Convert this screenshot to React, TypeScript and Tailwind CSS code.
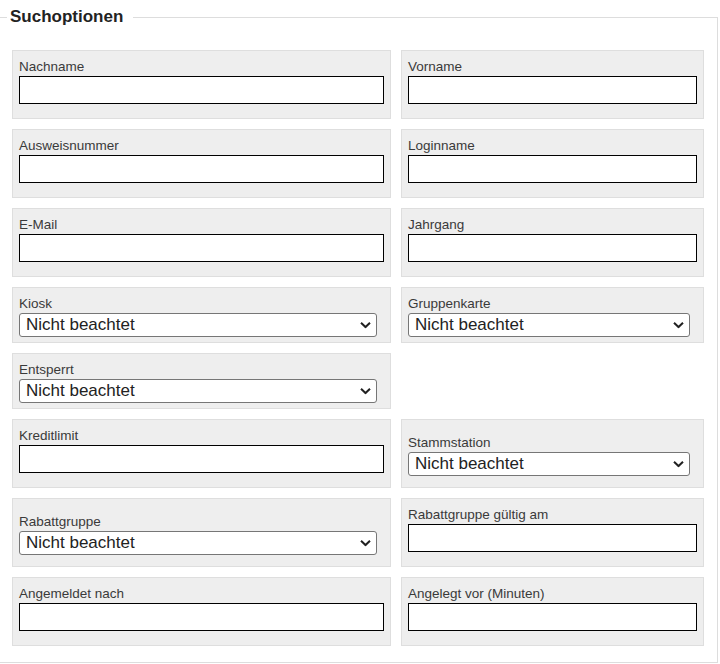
type Field = { label: string; kind: "text" | "select" } | null;

// Search form, two columns; null leaves a grid slot empty
const FIELDS: Field[] = [
  { label: "Nachname", kind: "text" },
  { label: "Vorname", kind: "text" },
  { label: "Ausweisnummer", kind: "text" },
  { label: "Loginname", kind: "text" },
  { label: "E-Mail", kind: "text" },
  { label: "Jahrgang", kind: "text" },
  { label: "Kiosk", kind: "select" },
  { label: "Gruppenkarte", kind: "select" },
  { label: "Entsperrt", kind: "select" },
  null,
  { label: "Kreditlimit", kind: "text" },
  { label: "Stammstation", kind: "select" },
  { label: "Rabattgruppe", kind: "select" },
  { label: "Rabattgruppe gültig am", kind: "text" },
  { label: "Angemeldet nach", kind: "text" },
  { label: "Angelegt vor (Minuten)", kind: "text" },
];

function Chevron() {
  return (
    <svg width="11" height="7" viewBox="0 0 11 7" className="pointer-events-none absolute right-[6px] top-1/2 -translate-y-1/2">
      <path d="M1 1.2 5.5 5.5 10 1.2" fill="none" stroke="#222" strokeWidth="2" />
    </svg>
  );
}

function FieldCell({ field }: { field: NonNullable<Field> }) {
  const isSelect = field.kind === "select";
  return (
    <div
      className={`flex flex-col justify-center border border-[#dedede] bg-[#eeeeee] px-[6px] pt-[8px] ${
        isSelect ? "pb-[5px]" : "pb-[14px]"
      }`}
    >
      <label className="mb-[1px] block text-[13.5px] leading-[16px] text-[#3a3a3a]">{field.label}</label>
      {isSelect ? (
        <div className="relative w-[calc(100%-7px)]">
          <select
            defaultValue="n"
            className="block h-[24px] w-full appearance-none rounded-[3px] border border-[#767676] bg-white pl-[6px] text-[17px] leading-[20px] text-[#222]"
          >
            <option value="n">Nicht beachtet</option>
            <option value="j">Ja</option>
            <option value="x">Nein</option>
          </select>
          <Chevron />
        </div>
      ) : (
        <input type="text" className="block h-[28px] w-full border border-black bg-white px-[3px] text-[13px]" />
      )}
    </div>
  );
}

export default function App() {
  return (
    <div className="h-[664px] w-[720px] overflow-hidden bg-white pt-[7px] font-['Liberation_Sans',Arial,sans-serif]">
      <fieldset className="w-[718px] border border-l-0 border-[#dddddd] pb-[16px] pl-[12px] pr-[13px] pt-[23px]">
        <legend className="-ml-[5px] pl-[3px] pr-[10px] text-[17px] font-bold leading-[20px] text-[#222]">
          Suchoptionen
        </legend>
        <div className="grid grid-cols-[379px_303px] gap-x-[10px] gap-y-[10px]">
          {FIELDS.map((f, i) => (f ? <FieldCell key={f.label} field={f} /> : <div key={`empty-${i}`} />))}
        </div>
      </fieldset>
    </div>
  );
}
